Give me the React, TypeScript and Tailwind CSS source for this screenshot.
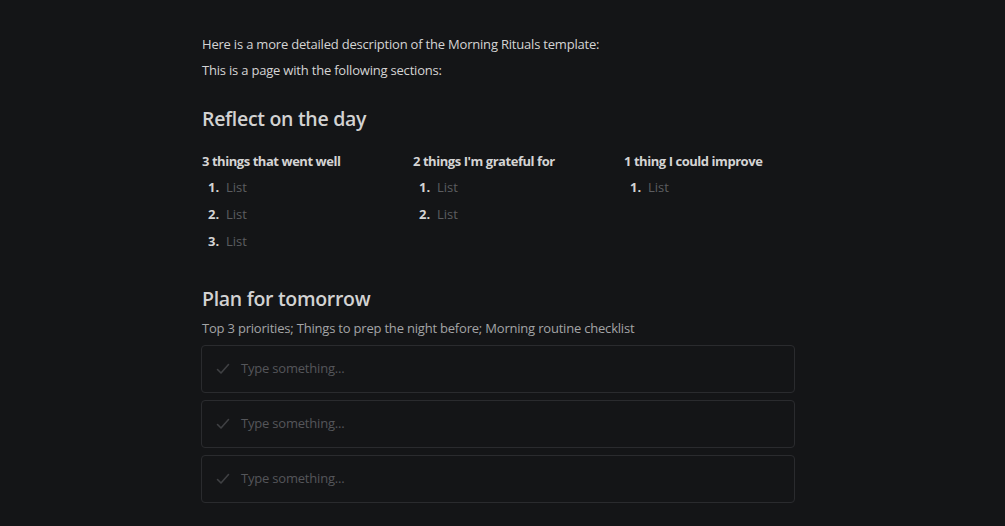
import React from "react";

const columns = [
  { title: "3 things that went well", count: 3 },
  { title: "2 things I'm grateful for", count: 2 },
  { title: "1 thing I could improve", count: 1 },
];

function CheckIcon() {
  return (
    <svg width="14" height="14" viewBox="0 0 14 14" fill="none" className="shrink-0">
      <path d="M1.5 7.5 L5 11 L12.5 2.5" stroke="#3f4043" strokeWidth="1.6" strokeLinecap="round" strokeLinejoin="round" />
    </svg>
  );
}

export default function App() {
  return (
    <div className="min-h-[526px] bg-[#141517] text-[#d4d4d4] font-['Open_Sans',sans-serif]">
      <div className="w-[594px] ml-[201px] pt-[33px] pl-px">
        <p className="text-[13px] leading-[22px] tracking-[-0.2px]">Here is a more detailed description of the Morning Rituals template:</p>
        <p className="text-[13px] leading-[22px] mt-[4px] tracking-[-0.2px]">This is a page with the following sections:</p>

        <h2 className="text-[19.5px] font-semibold leading-[28px] mt-[24px] text-[#d2d2d2] tracking-[-0.3px]">Reflect on the day</h2>

        <div className="grid grid-cols-[211px_211px_1fr] mt-[18px]">
          {columns.map((c) => (
            <div key={c.title}>
              <h3 className="text-[13px] font-bold leading-[20px] tracking-[-0.45px]">{c.title}</h3>
              <ol className="mt-[3px]">
                {Array.from({ length: c.count }).map((_, i) => (
                  <li key={i} className="flex items-center h-[27px] text-[13px]">
                    <span className="w-[24px] pl-[6px] font-bold text-[#d4d4d4]">{i + 1}.</span>
                    <span className="text-[#5c5d60]">List</span>
                  </li>
                ))}
              </ol>
            </div>
          ))}
        </div>

        <h2 className="text-[19.5px] font-semibold leading-[28px] mt-[30px] text-[#d2d2d2] tracking-[-0.3px]">Plan for tomorrow</h2>
        <p className="text-[13px] leading-[20px] mt-[5px] text-[#a3a4a6] tracking-[-0.2px]">Top 3 priorities; Things to prep the night before; Morning routine checklist</p>

        <div className="flex flex-col gap-[7px] mt-[7px] -ml-px">
          {[0, 1, 2].map((i) => (
            <div key={i} className="h-[48px] border border-[#2a2b2e] rounded-[4px] flex items-center gap-[11px] pl-[14px]">
              <CheckIcon />
              <span className="text-[13px] text-[#55565a] tracking-[-0.2px]">Type something...</span>
            </div>
          ))}
        </div>
      </div>
    </div>
  );
}
